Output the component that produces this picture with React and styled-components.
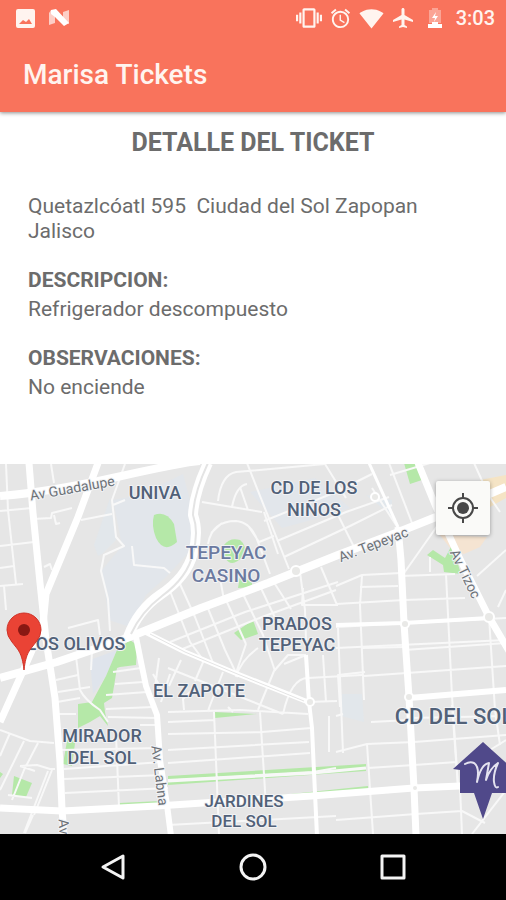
import React from "react";
import styled, { createGlobalStyle } from "styled-components";
import {
  MdVibration,
  MdAlarm,
  MdSignalWifi4Bar,
  MdAirplanemodeActive,
} from "react-icons/md";

const GlobalStyle = createGlobalStyle`
  * { box-sizing: border-box; }
  body { margin: 0; background: #fff; font-family: Roboto, "Liberation Sans", sans-serif; }
`;

const Screen = styled.div`
  display: flex;
  flex-direction: column;
  min-height: 100vh;
  overflow: hidden;
`;

const Header = styled.header`
  background: #f9735c;
  color: #fff4ef;
  box-shadow: 0 1px 4px rgba(0, 0, 0, 0.45);
`;

const StatusBar = styled.div`
  display: flex;
  align-items: center;
  justify-content: space-between;
  height: 36px;
  padding: 0 11px 0 16px;
`;

const StatusGroup = styled.div`
  display: flex;
  align-items: center;
  gap: ${(p) => p.$gap}px;
`;

const BatterySlot = styled.span`
  display: flex;
  margin: 0 0 0 6px;
`;

const Clock = styled.time`
  margin-left: 7px;
  font-size: 20px;
  line-height: 24px;
  font-weight: 500;
`;

const AppTitle = styled.h1`
  margin: 0;
  padding: 23px 23px 21px;
  font-size: 28px;
  line-height: 32px;
  font-weight: 500;
`;

const Detail = styled.main`
  padding: 16px 28px 64px;
  color: #6c6c6c;
  font-size: 21px;
  line-height: 25px;
`;

const DetailTitle = styled.h2`
  margin: 0 0 36px;
  text-align: center;
  font-size: 25px;
  line-height: 30px;
  font-weight: 700;
`;

const Address = styled.p`
  margin: 0;
`;

const Field = styled.section`
  margin-top: 24px;
`;

const FieldName = styled.h3`
  margin: 0 0 4px;
  font-size: 21px;
  line-height: 25px;
  font-weight: 700;
`;

const FieldValue = styled.p`
  margin: 0;
`;

const MapPanel = styled.section`
  position: relative;
  flex: 1;
  display: grid;
  min-height: 300px;
  background: #e6e6e6;
  overflow: hidden;
`;

const MapDrawing = styled.svg`
  width: 100%;
  height: 100%;
  min-height: 0;
`;

const LocateButton = styled.button`
  position: absolute;
  top: 17px;
  right: 16px;
  display: grid;
  place-items: center;
  width: 54px;
  height: 54px;
  padding: 0;
  border: 0;
  border-radius: 2px;
  background: #fafaf8;
  color: #484848;
  box-shadow: 0 1px 4px rgba(0, 0, 0, 0.35);
`;

const MapLabel = styled.text`
  font-family: Roboto, sans-serif;
  font-size: ${(p) => p.$size || 18}px;
  font-weight: 500;
  fill: ${(p) => p.$color || "#516178"};
  stroke: #f2f3f5;
  stroke-width: 2px;
  stroke-linejoin: round;
  paint-order: stroke;
  text-anchor: middle;
`;

const RoadLabel = styled(MapLabel)`
  font-size: 14px;
  font-weight: 400;
  fill: #6d7278;
`;

const NavBar = styled.nav`
  display: flex;
  align-items: center;
  justify-content: space-around;
  height: 66px;
  padding: 0 43px;
  background: #000;
`;

const NavButton = styled.button`
  display: grid;
  place-items: center;
  width: 48px;
  height: 48px;
  padding: 0;
  border: 0;
  background: none;
  color: #f4f4f4;
`;

const avenues = [
  ["M0 496Q50 492 117 477T200 461", 8],
  ["M29 463L33 513L40 583L46 640L55 698L60 762L62 809L64 836", 7],
  ["M98 463L78 517L46 594L43 625L23 671L0 722", 7],
  ["M0 678L57 662L127 638L201 608L268 583L338 555L396 533L436 517L506 487", 8],
  ["M418 463L436 507L459 557L489 617L509 651", 7],
  ["M398 527L401 560L404 623L409 697L414 788L416 836", 7],
  ["M409 698L506 690", 6],
  ["M0 808L62 811L157 806L311 796L414 788L506 784", 7],
  ["M136 637L141 662L146 686L157 715L160 760L167 805L171 836", 6],
  ["M128 637Q138 610 160 595Q187 577 193 553Q199 532 193 515Q194 493 208 463", 10],
  ["M143 631L185 652L235 673L308 702", 5],
  ["M306 655L309 702L312 728L314 772L317 836", 4],
  ["M369 463L398 527", 3],
  ["M336 625L404 623L489 618", 4],
];

const streets = [
  // north west
  "M6 464L8 510L16 584M0 511L32 508M0 546L34 542M0 568L14 566M0 586L23 584M4 586L6 610M51 464L54 483",
  "M33 519L51 518L52 513L72 508M54 515L56 524L60 523M81 520L112 514M125 464L112 500L116 537L124 546L104 555L101 571L108 599L110 631M113 505L125 500M132 546L134 565L164 568L170 573M44 567L50 564L52 570M68 628L98 620L100 635",
  // casino
  "M218 501Q221 475 236 472L325 464M232 507Q236 486 247 484M240 487L248 510M202 502L262 512M247 463L289 569M264 512L278 554M208 544Q212 521 236 521Q251 522 258 542L270 574M211 533L222 523M249 527L259 542L274 536",
  "M264 521L336 492L372 474M277 541L346 512L389 497M284 557L350 526L392 505M338 515L356 551M325 464L346 498M372 488L398 528M389 463L412 523",
  "M170 591L190 642L204 661M180 584L195 617L213 663M207 606L225 650L238 677M226 600L246 644M243 594L263 635L275 671M260 586L276 620M273 581L291 609M170 642L245 612L338 582M180 650L262 617L336 590M220 578L224 600M300 572L305 610L306 640M303 588L302 605L338 605M321 567L337 605",
  // east
  "M390 475L430 463M474 463L489 496L500 512M440 522L402 576M477 576L506 550M430 557V572M336 586L362 575L401 573M401 576L455 574M362 576L360 605L364 700M336 604L404 600L465 598M360 587L398 586M446 574L452 696L458 786M336 627L506 618M404 650L506 643M489 617L495 710L500 745M506 590L498 607M365 672L338 675L340 707M362 648L404 647M364 676L506 666M338 628L343 753",
  "M336 648L506 640M336 716L343 714M371 722L409 720M336 752L367 744L414 742L506 735M367 744L373 834M368 768L414 765L457 762M336 820L416 814L462 811L485 823M460 787L462 834M472 834L506 790M452 705L458 787M490 750L506 740M409 718L506 716",
  // south centre
  "M168 712L240 710L308 714M168 722L215 720M168 734L262 732L311 728M168 750L309 742M168 763L310 753M214 712L219 834M260 712L266 806M181 660L169 686M204 660L195 681M223 672L209 708L208 712M168 668L283 714M236 677Q241 660 258 648M246 644L236 673M283 714Q291 678 308 678L362 675M258 710L274 671L288 655L306 655M308 702L337 701M284 664L306 655M329 752L329 716M168 780L313 772L336 768M168 825L336 816M323 655L326 702M184 710L183 699L190 692M233 712L228 707",
  // west
  "M76 656L80 690Q85 700 100 710L108 722M92 651L91 670M56 680L78 675M58 692L90 687M57 702L80 698M59 714L76 714M106 695L147 692M106 709L153 707M108 717L158 718M115 684L143 682M113 672L141 668M60 750L160 748M64 769L162 762M64 779L163 775M65 793L168 788M116 735L119 807M0 730L30 741L54 743M10 733L0 756M24 741L0 790M38 743L24 770L12 800M20 766L35 771M20 766L37 765L50 769L55 769M48 771L24 833M33 815L25 833M8 795L32 798M52 770L34 815M140 725L160 725M153 674L162 690M159 658L155 687M170 674L161 702",
];

const parks = [
  "M154 515Q166 510 174 524L177 542Q164 554 156 538Q151 525 154 515Z",
  "M224 545Q230 537 240 540Q248 546 243 556Q232 569 225 558Z",
  "M240 576L252 582V587L238 588Z",
  "M234 633L253 620L258 634L241 640Z",
  "M404 463H415L422 480L410 484Z",
  "M427 555L433 550L445 558L452 545L461 574L444 572L443 565Z",
  "M130 640L137 645L136 665L120 667L117 668L112 698L104 703L105 712L108 726L100 716L90 722L78 728V704L92 702L106 676L117 650Z",
  "M68 735L75 743L72 766L63 764Z",
  "M14 776L32 783L26 797L12 795Z",
  "M0 772L3 774L0 778Z",
  "M214 712L257 714L215 718Z",
  "M168 776L366 764V771L168 785Z",
  "M281 795L368 786V791L282 799Z",
  "M119 803L160 801L159 804L120 806Z",
];

const areas = [
  ["M113 500L140 495L183 474L194 515L193 548L166 577L146 595L130 627L109 620L102 570L122 546Z", "#e2e6eb"],
  ["M94 545L110 498L116 540L102 554L98 556Z", "#e2e7eb"],
  ["M250 492L315 478L350 508L330 515L282 528Z", "#e2e6eb"],
  ["M90 660L117 650L106 676L93 694Z", "#dfe4ec"],
  ["M366 495L392 500L391 515Z", "#e1e7ec"],
  ["M342 694L362 694L364 722L341 716Z", "#e2e7eb"],
  ["M480 480L506 475V498L490 507Z", "#f5e4c5"],
  ["M440 535L487 537L480 547L464 554L450 548Z", "#f5e4d2"],
];

const roundabouts = [
  [405, 624, 4],
  [489, 617, 5],
  [409, 697, 4],
  [415, 788, 3],
  [310, 702, 4],
  [375, 497, 4],
  [296, 571, 5],
];

const placeLabels = [
  { x: 155, lines: [["UNIVA", 499]] },
  { x: 314, lines: [["CD DE LOS", 494], ["NIÑOS", 516]] },
  { x: 226, size: 19, color: "#6c7aa0", lines: [["TEPEYAC", 559], ["CASINO", 582]] },
  { x: 76, lines: [["LOS OLIVOS", 650]] },
  { x: 297, lines: [["PRADOS", 630], ["TEPEYAC", 651]] },
  { x: 199, lines: [["EL ZAPOTE", 697]] },
  { x: 102, lines: [["MIRADOR", 742], ["DEL SOL", 764]] },
  { x: 244, size: 17, lines: [["JARDINES", 807], ["DEL SOL", 827]] },
  { x: 454, size: 22, lines: [["CD DEL SOL", 724]] },
];

function PictureIcon() {
  return (
    <svg width="19" height="19" viewBox="0 0 19 19" aria-hidden="true">
      <path
        fill="currentColor"
        fillRule="evenodd"
        d="M2 0H17Q19 0 19 2V17Q19 19 17 19H2Q0 19 0 17V2Q0 0 2 0ZM3 15H16L13 10L10 13L7 11Z"
      />
    </svg>
  );
}

function NougatIcon() {
  return (
    <svg width="21" height="18" viewBox="0 0 21 18" aria-hidden="true">
      <path fill="#fff" opacity=".65" d="M0 4L2 1L6 4V14L0 16ZM14 3L20 1V15L14 12Z" />
      <path fill="#fff" d="M2 1L7 0L20 14L15 17L6 8L2 5Z" />
    </svg>
  );
}

function BatteryIcon() {
  return (
    <svg width="14" height="20" viewBox="0 0 14 20" aria-hidden="true">
      <path fill="#fff" opacity=".35" d="M1 2H4V0H10V2H13V15H1Z" />
      <path fill="#fff" d="M0 16H4V14H10V16H14V20H0ZM8 4L4 10H7L6 14L10 8H7Z" />
    </svg>
  );
}

function LocateIcon() {
  return (
    <svg width="30" height="30" viewBox="0 0 30 30" fill="none" stroke="currentColor" strokeWidth="2" aria-hidden="true">
      <circle cx="15" cy="15" r="10" />
      <circle cx="15" cy="15" r="6" fill="currentColor" stroke="none" />
      <path d="M15 0V5M15 25V30M0 15H5M25 15H30" />
    </svg>
  );
}

function StreetMap() {
  return (
    <MapDrawing
      viewBox="0 464 506 370"
      preserveAspectRatio="xMidYMid slice"
      role="img"
      aria-label="Mapa de Ciudad del Sol"
    >
      {areas.map(([d, fill]) => (
        <path key={d} d={d} fill={fill} />
      ))}
      {parks.map((d) => (
        <path key={d} d={d} fill="#b5e8a8" />
      ))}
      <g fill="none" stroke="#f8f8f8" strokeLinejoin="round">
        {streets.map((d) => (
          <path key={d} d={d} strokeWidth="2" />
        ))}
        <path d="M168 781L313 773L366 768" strokeWidth="3" />
      </g>
      <g fill="none" stroke="#fff" strokeLinejoin="round">
        {avenues.map(([d, width]) => (
          <path key={d} d={d} strokeWidth={width} />
        ))}
      </g>
      <g fill="none" stroke="#e4e4e4" strokeWidth="2">
        <path d="M131 634Q141 612 162 596Q188 577 193 553Q199 532 193 515Q194 493 208 463" />
        <path d="M150 634L185 652L235 673L304 701" strokeWidth="1" />
      </g>
      {roundabouts.map(([cx, cy, r]) => (
        <circle key={cx} cx={cx} cy={cy} r={r} fill="#e9e9e7" stroke="#fff" strokeWidth="2" />
      ))}

      <RoadLabel transform="translate(73 493) rotate(-10)">Av Guadalupe</RoadLabel>
      <RoadLabel transform="translate(375 549) rotate(-21)">Av. Tepeyac</RoadLabel>
      <RoadLabel transform="translate(461 576) rotate(64)">Av Tizoc</RoadLabel>
      <RoadLabel transform="translate(155 776) rotate(83)">Av. Labna</RoadLabel>
      <RoadLabel transform="translate(59 827) rotate(86)">Av</RoadLabel>

      {placeLabels.map(({ x, size, color, lines }) =>
        lines.map(([text, y]) => (
          <MapLabel key={text + y} x={x} y={y} $size={size} $color={color}>
            {text}
          </MapLabel>
        ))
      )}

      <path
        d="M24 670C22 652 18 650 12 642Q7 636 7 630A17 17 0 0 1 41 630Q41 636 36 642C30 650 26 652 24 670Z"
        fill="#ea4335"
        stroke="#cf3329"
        strokeWidth="1"
      />
      <circle cx="24" cy="630" r="6" fill="#891813" />

      <path d="M483 742L513 769H507V793H492L483 819L474 793H460V770L453 769Z" fill="#50498a" />
      <path
        d="M465 764Q470 761 474 763Q480 767 477 782Q481 764 489 763L486 780Q490 768 498 763Q493 774 494 782Q495 789 498 787"
        fill="none"
        stroke="#e4e2f0"
        strokeWidth="2"
        strokeLinecap="round"
        strokeLinejoin="round"
      />
    </MapDrawing>
  );
}

export default function App() {
  return (
    <>
      <GlobalStyle />
      <Screen>
        <Header>
          <StatusBar>
            <StatusGroup $gap={14}>
              <PictureIcon />
              <NougatIcon />
            </StatusGroup>
            <StatusGroup $gap={7}>
              <MdVibration size={26} />
              <MdAlarm size={23} />
              <MdSignalWifi4Bar size={25} />
              <MdAirplanemodeActive size={24} />
              <BatterySlot>
                <BatteryIcon />
              </BatterySlot>
              <Clock>3:03</Clock>
            </StatusGroup>
          </StatusBar>
          <AppTitle>Marisa Tickets</AppTitle>
        </Header>
        <Detail>
          <DetailTitle>DETALLE DEL TICKET</DetailTitle>
          <Address>Quetazlcóatl 595&nbsp; Ciudad del Sol Zapopan Jalisco</Address>
          <Field>
            <FieldName>DESCRIPCION:</FieldName>
            <FieldValue>Refrigerador descompuesto</FieldValue>
          </Field>
          <Field>
            <FieldName>OBSERVACIONES:</FieldName>
            <FieldValue>No enciende</FieldValue>
          </Field>
        </Detail>
        <MapPanel>
          <StreetMap />
          <LocateButton type="button" aria-label="Mi ubicación">
            <LocateIcon />
          </LocateButton>
        </MapPanel>
        <NavBar>
          <NavButton type="button" aria-label="Atrás">
            <svg width="28" height="28" viewBox="0 0 28 28" fill="none" stroke="currentColor" strokeWidth="3" strokeLinejoin="round">
              <path d="M4 14L24 3V25Z" />
            </svg>
          </NavButton>
          <NavButton type="button" aria-label="Inicio">
            <svg width="28" height="28" viewBox="0 0 28 28" fill="none" stroke="currentColor" strokeWidth="3">
              <circle cx="14" cy="14" r="12" />
            </svg>
          </NavButton>
          <NavButton type="button" aria-label="Recientes">
            <svg width="28" height="28" viewBox="0 0 28 28" fill="none" stroke="currentColor" strokeWidth="3" strokeLinejoin="round">
              <rect x="3" y="3" width="22" height="22" />
            </svg>
          </NavButton>
        </NavBar>
      </Screen>
    </>
  );
}
